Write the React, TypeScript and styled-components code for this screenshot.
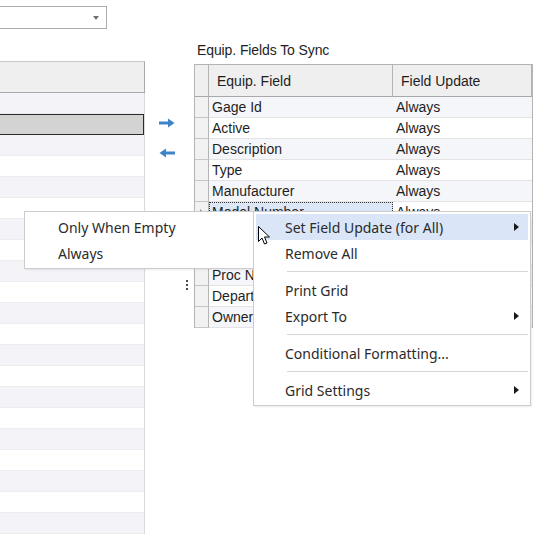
import React from "react";
import styled, { createGlobalStyle, css } from "styled-components";

const Global = createGlobalStyle`
  html, body { margin: 0; padding: 0; background: #fff; }
  body { width: 534px; height: 534px; overflow: hidden; font-family: "Liberation Sans", Arial, sans-serif; }
  * { box-sizing: border-box; }
`;

const Page = styled.div`
  position: relative;
  width: 534px;
  height: 534px;
  display: flex;
  overflow: hidden;
  background: #fff;
`;

const LeftCol = styled.div`
  margin-left: -20px;
  width: 165px;
  display: flex;
  flex-direction: column;
  flex-shrink: 0;
`;

const Combo = styled.div`
  margin-top: 6px;
  width: 127px;
  height: 26px;
  border: 1px solid #acacac;
  background: #fff;
  display: flex;
  align-items: center;
  justify-content: flex-end;
  padding-right: 7px;
`;

const ComboArrow = styled.span`
  width: 0;
  height: 0;
  border-left: 3.5px solid transparent;
  border-right: 3.5px solid transparent;
  border-top: 4px solid #707070;
`;

const LeftGrid = styled.div`
  margin-top: 32px;
  flex: 1;
  border-right: 1px solid #dadada;
  display: flex;
  flex-direction: column;
`;

const LeftHeader = styled.div`
  height: 32px;
  flex-shrink: 0;
  background: #efefef;
  border-top: 1px solid #c9c9c9;
  border-bottom: 1px solid #a9a9a9;
  margin-right: -1px;
  border-right: 1px solid #a9a9a9;
`;

const LeftRow = styled.div<{ $alt: boolean; $selected?: boolean }>`
  height: 21px;
  flex-shrink: 0;
  background: ${(p) => (p.$alt ? "#f4f4f8" : "#ffffff")};
  border-bottom: 1px solid #ececf0;
  ${(p) =>
    p.$selected &&
    css`
      background: #d3d3d3;
      border: 1px solid #2a2a2a;
    `}
`;

const Middle = styled.div`
  width: 49px;
  flex-shrink: 0;
  display: flex;
  flex-direction: column;
  align-items: flex-start;
  padding-top: 118px;
  padding-left: 14px;
`;

const ArrowIcon = styled.svg`
  width: 16px;
  height: 10px;
  display: block;
  & + & {
    margin-top: 20px;
  }
`;

const Grip = styled.div`
  margin-top: 122px;
  align-self: flex-end;
  margin-right: 6px;
  display: flex;
  flex-direction: column;
  gap: 2px;
`;

const GripDot = styled.span`
  width: 2px;
  height: 2px;
  background: #4a4a4a;
`;

const RightCol = styled.div`
  width: 339px;
  flex-shrink: 0;
  display: flex;
  flex-direction: column;
`;

const Caption = styled.div`
  padding: 42px 0 0 3px;
  height: 64px;
  font-size: 14px;
  line-height: 16px;
  color: #1e1e1e;
  letter-spacing: -0.1px;
`;

const Grid = styled.div`
  display: grid;
  grid-template-columns: 14px 184px 1fr;
  border-top: 1px solid #b4b4b4;
  border-left: 1px solid #b4b4b4;
  border-right: 1px solid #b4b4b4;
  font-size: 14px;
  color: #1e1e1e;
`;

const HeadCell = styled.div<{ $corner?: boolean }>`
  height: 32px;
  background: #efefef;
  border-bottom: 1px solid #a9a9a9;
  border-right: 1px solid #b4b4b4;
  display: flex;
  align-items: center;
  padding-left: ${(p) => (p.$corner ? "0" : "8px")};
  &:last-child {
    border-right: none;
  }
`;

const RowHead = styled.div`
  height: 21px;
  background: #f2f2f2;
  border-bottom: 1px solid #c6c6c6;
  border-right: 1px solid #b4b4b4;
  display: flex;
  align-items: center;
  justify-content: center;
`;

const Pointer = styled.span`
  width: 0;
  height: 0;
  border-top: 3px solid transparent;
  border-bottom: 3px solid transparent;
  border-left: 3px solid #8a8a8a;
`;

const Cell = styled.div<{ $alt: boolean; $focused?: boolean; $pad: number }>`
  height: 21px;
  background: ${(p) => (p.$alt ? "#f5f6f9" : "#ffffff")};
  border-bottom: 1px solid #e3e3e6;
  display: flex;
  align-items: center;
  padding-left: ${(p) => p.$pad}px;
  white-space: nowrap;
  overflow: hidden;
  ${(p) =>
    p.$focused &&
    css`
      background: #dbe6f6;
      outline: 1px dotted #333;
      outline-offset: -1px;
    `}
`;

const Menu = styled.div<{ $left: number; $width: number }>`
  position: absolute;
  top: 211px;
  left: ${(p) => p.$left}px;
  width: ${(p) => p.$width}px;
  background: #fff;
  border: 1px solid #cccccc;
  box-shadow: 1px 1px 2px rgba(0, 0, 0, 0.08);
  padding: 2px 2px;
  font-family: "Noto Sans", "Open Sans", sans-serif;
  font-size: 14px;
  color: #2b2b2b;
`;

const MenuItem = styled.div<{ $active?: boolean; $indent: number }>`
  height: 26px;
  display: flex;
  align-items: center;
  padding-left: ${(p) => p.$indent}px;
  padding-right: 9px;
  background: ${(p) => (p.$active ? "#dae6f7" : "transparent")};
  white-space: nowrap;
`;

const ItemLabel = styled.span`
  flex: 1;
`;

const SubArrow = styled.span`
  width: 0;
  height: 0;
  border-top: 4px solid transparent;
  border-bottom: 4px solid transparent;
  border-left: 5px solid #1a1a1a;
`;

const Separator = styled.div`
  height: 11px;
  display: flex;
  align-items: center;
  padding-left: 31px;
  &::after {
    content: "";
    flex: 1;
    height: 1px;
    background: #d6d6d6;
  }
`;

const Cursor = styled.svg`
  position: absolute;
  left: 258px;
  top: 226px;
  width: 13px;
  height: 20px;
`;

const leftRowCount = 21;
const rows: { field: string; update: string }[] = [
  { field: "Gage Id", update: "Always" },
  { field: "Active", update: "Always" },
  { field: "Description", update: "Always" },
  { field: "Type", update: "Always" },
  { field: "Manufacturer", update: "Always" },
  { field: "Model Number", update: "Always" },
  { field: "", update: "" },
  { field: "", update: "" },
  { field: "Proc Number", update: "Always" },
  { field: "Department", update: "Always" },
  { field: "Owner", update: "Always" },
];

export default function App() {
  return (
    <>
      <Global />
      <Page>
        <LeftCol>
          <Combo>
            <ComboArrow />
          </Combo>
          <LeftGrid>
            <LeftHeader />
            {Array.from({ length: leftRowCount }).map((_, i) => (
              <LeftRow key={i} $alt={i % 2 === 0} $selected={i === 1} />
            ))}
          </LeftGrid>
        </LeftCol>

        <Middle>
          <ArrowIcon viewBox="0 0 16 10">
            <path d="M0 5h11" stroke="#3f83c9" strokeWidth="3" />
            <path d="M9 0.5L15.5 5L9 9.5Z" fill="#3f83c9" />
          </ArrowIcon>
          <ArrowIcon viewBox="0 0 16 10">
            <path d="M5 5h11" stroke="#3f83c9" strokeWidth="3" />
            <path d="M7 0.5L0.5 5L7 9.5Z" fill="#3f83c9" />
          </ArrowIcon>
          <Grip>
            <GripDot />
            <GripDot />
            <GripDot />
          </Grip>
        </Middle>

        <RightCol>
          <Caption>Equip. Fields To Sync</Caption>
          <Grid>
            <HeadCell $corner />
            <HeadCell>Equip. Field</HeadCell>
            <HeadCell>Field Update</HeadCell>
            {rows.map((r, i) => (
              <React.Fragment key={i}>
                <RowHead>{i === 5 && <Pointer />}</RowHead>
                <Cell $alt={i % 2 === 0} $pad={3} $focused={i === 5}>
                  {r.field}
                </Cell>
                <Cell $alt={i % 2 === 0} $pad={3}>
                  {r.update}
                </Cell>
              </React.Fragment>
            ))}
          </Grid>
        </RightCol>

        <Menu $left={24} $width={231}>
          <MenuItem $indent={31}>
            <ItemLabel>Only When Empty</ItemLabel>
          </MenuItem>
          <MenuItem $indent={31}>
            <ItemLabel>Always</ItemLabel>
          </MenuItem>
        </Menu>

        <Menu $left={253} $width={278}>
          <MenuItem $active $indent={29}>
            <ItemLabel>Set Field Update (for All)</ItemLabel>
            <SubArrow />
          </MenuItem>
          <MenuItem $indent={29}>
            <ItemLabel>Remove All</ItemLabel>
          </MenuItem>
          <Separator />
          <MenuItem $indent={29}>
            <ItemLabel>Print Grid</ItemLabel>
          </MenuItem>
          <MenuItem $indent={29}>
            <ItemLabel>Export To</ItemLabel>
            <SubArrow />
          </MenuItem>
          <Separator />
          <MenuItem $indent={29}>
            <ItemLabel>Conditional Formatting...</ItemLabel>
          </MenuItem>
          <Separator />
          <MenuItem $indent={29}>
            <ItemLabel>Grid Settings</ItemLabel>
            <SubArrow />
          </MenuItem>
        </Menu>

        <Cursor viewBox="0 0 13 20">
          <path
            d="M0.5 0.5 L0.5 15.5 L4 12 L6.5 18 L9 17 L6.5 11 L11.5 11 Z"
            fill="#fff"
            stroke="#000"
            strokeWidth="1"
            strokeLinejoin="miter"
          />
        </Cursor>
      </Page>
    </>
  );
}
